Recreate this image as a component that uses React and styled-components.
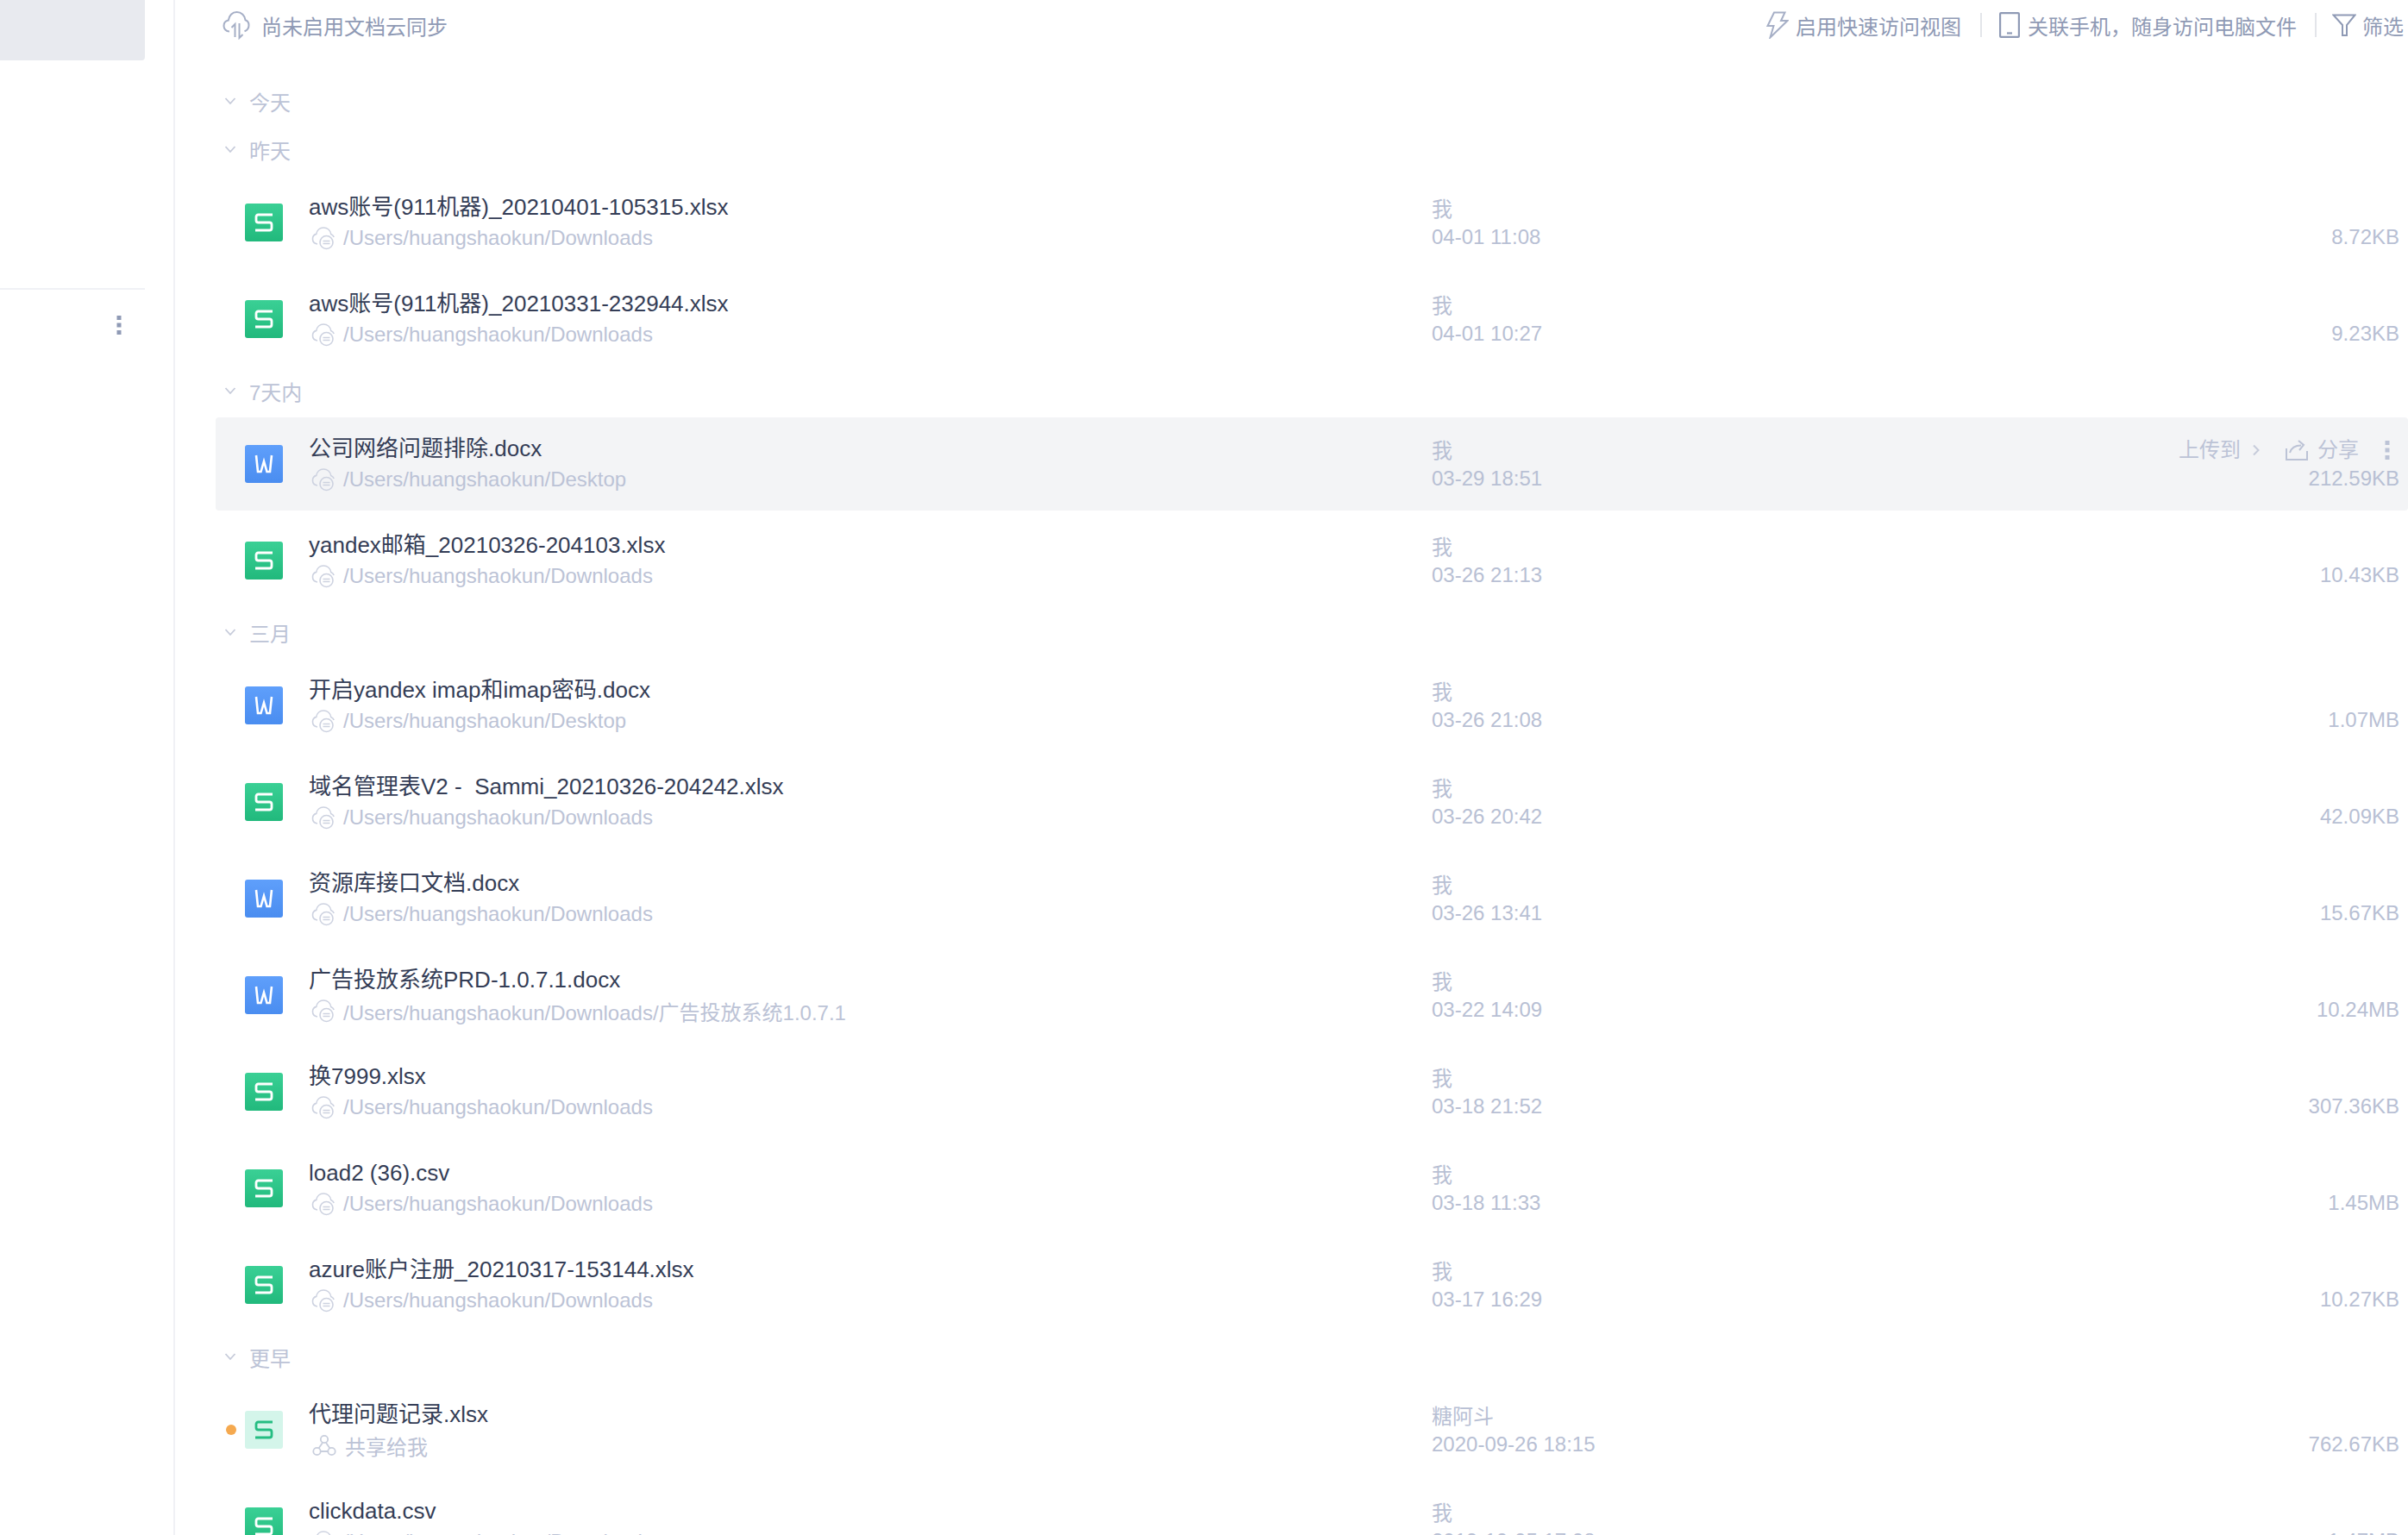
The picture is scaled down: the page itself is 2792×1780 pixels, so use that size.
import React from 'react';
import styled, { createGlobalStyle } from 'styled-components';

const FONT = '"Liberation Sans", "Noto Sans CJK SC", sans-serif';

const GlobalStyle = createGlobalStyle`
  html, body { margin: 0; padding: 0; background: #fff; }
  body { font-family: ${FONT}; overflow: hidden; }
`;

const Page = styled.div`
  display: flex;
  width: 2792px;
  height: 1780px;
  overflow: hidden;
`;

const Sidebar = styled.aside`
  width: 201px;
  flex: none;
  border-right: 2px solid #f0f1f5;
  display: flex;
  flex-direction: column;
`;

const SideActive = styled.div`
  width: 168px;
  height: 70px;
  background: #e8eaef;
  border-bottom-right-radius: 4px;
`;

const SideRule = styled.div`
  width: 168px;
  height: 2px;
  margin-top: 264px;
  background: #f0f1f5;
`;

const SideMore = styled.div`
  display: flex;
  justify-content: flex-end;
  width: 168px;
  margin-top: 30px;
  padding-right: 27px;
  box-sizing: border-box;
`;

const Main = styled.main`
  flex: 1;
  min-width: 0;
  padding-left: 47px;
`;

const Toolbar = styled.div`
  height: 90px;
  padding-bottom: 32px;
  box-sizing: border-box;
  display: flex;
  align-items: center;
  justify-content: space-between;
  padding-left: 8px;
  padding-right: 5px;
  color: #8f9ab5;
  font-size: 24px;
`;

const ToolGroup = styled.div`
  display: flex;
  align-items: center;
`;

const ToolItem = styled.span`
  display: flex;
  align-items: center;
  gap: ${(p) => p.$gap || 8}px;
`;

const ToolRule = styled.span`
  width: 2px;
  height: 28px;
  margin: 0 ${(p) => p.$right}px 0 ${(p) => p.$left}px;
  background: #e3e5ea;
`;

const SectionHead = styled.div`
  height: 56px;
  padding-bottom: 2px;
  box-sizing: border-box;
  display: flex;
  align-items: center;
  gap: 15px;
  padding-left: 10px;
  color: #bcc3d6;
  font-size: 24px;
`;

const RowSlot = styled.div`
  padding: 2px 0;
`;

const Row = styled.div`
  position: relative;
  height: 108px;
  padding-left: 34px;
  padding-right: 10px;
  display: grid;
  grid-template-columns: 44px 1332px 1fr auto;
  align-items: center;
  border-radius: 4px;
  background: ${(p) => (p.$active ? '#f3f4f6' : 'transparent')};
`;

const Unread = styled.span`
  position: absolute;
  left: 12px;
  top: 48px;
  width: 12px;
  height: 12px;
  border-radius: 50%;
  background: #f5a94f;
`;

const FileBadge = styled.div`
  width: 44px;
  height: 44px;
  border-radius: 3px;
  display: flex;
  align-items: center;
  justify-content: center;
  background: ${(p) =>
    p.$kind === 'w'
      ? 'linear-gradient(180deg, #5f9ffb, #4a8df0)'
      : p.$kind === 'shared'
      ? '#d4f5ea'
      : 'linear-gradient(180deg, #3ad095, #21b97c)'};
`;

const NameCol = styled.div`
  padding-left: 30px;
  display: flex;
  flex-direction: column;
  min-width: 0;
`;

const Title = styled.div`
  font-size: 26px;
  line-height: 36px;
  color: #343d56;
  white-space: pre;
`;

const PathLine = styled.div`
  display: flex;
  align-items: center;
  gap: 9px;
  height: 36px;
  padding-left: 3px;
  font-size: 24px;
  color: #bcc3d6;
  white-space: nowrap;
`;

const MetaCol = styled.div`
  display: flex;
  flex-direction: column;
  padding-top: 2px;
  font-size: 24px;
  line-height: 32px;
  color: #b8c0d4;
`;

const RightCol = styled.div`
  align-self: stretch;
  position: relative;
  display: flex;
  align-items: flex-end;
  justify-content: flex-end;
  padding-bottom: 21px;
  box-sizing: border-box;
  font-size: 24px;
  line-height: 32px;
  color: #b8c0d4;
`;

const RowActions = styled.div`
  position: absolute;
  right: 11px;
  top: 22px;
  display: flex;
  align-items: center;
  white-space: nowrap;
  color: #bcc3d6;
`;

const ActionText = styled.span`
  display: flex;
  align-items: center;
  gap: ${(p) => p.$gap || 0}px;
  margin-right: ${(p) => p.$mr || 0}px;
`;

const SheetGlyph = ({ color = '#fff' }) => (
  <svg width="22" height="22" viewBox="0 0 22 22" fill="none" stroke={color} strokeWidth="2.8">
    <path d="M21 2H4.500Q2 2 2 4.500V8.500Q2 11 4.500 11H17.500Q20 11 20 13.500V17.500Q20 20 17.500 20H1" />
  </svg>
);

const WordGlyph = () => (
  <svg width="22" height="22" viewBox="0 0 22 22" fill="none" stroke="#fff" strokeWidth="2.6">
    <path d="M2 1L4 20H7.500L11 8L14.500 20H18L20 1" />
  </svg>
);

const CloudSync = () => (
  <svg width="28" height="30" viewBox="0 0 28 30" fill="none" stroke="#cdd2e0" strokeWidth="1.6">
    <path d="M7 22C3.500 21.500 1.500 19 1.500 16c0-3 1.800-5 4.300-5.600C6.500 6 9.800 3 14 3c4.600 0 8 3 8.700 7.500 1.600.7 3 2 3.500 3.500" />
    <circle cx="17.500" cy="20" r="7.500" />
    <path d="M13.500 18.500h8M13.500 21.500h8" />
  </svg>
);

const SharedIcon = () => (
  <svg width="30" height="26" viewBox="0 0 30 26" fill="none" stroke="#c9cfdd" strokeWidth="1.800">
    <circle cx="15" cy="6" r="4.200" />
    <circle cx="6.500" cy="20" r="4.200" />
    <circle cx="23.500" cy="20" r="4.200" />
    <path d="M13 10l-4.500 6.500M17 10l4.500 6.500M11 20h8" />
  </svg>
);

const CloudOff = () => (
  <svg width="32" height="34" viewBox="0 0 32 34" fill="none" stroke="#a6afc6" strokeWidth="2">
    <path d="M8 24.500C4 24.500 1.500 21.500 1.500 18c0-3.300 2.200-5.800 5.300-6.400C7.500 6 11.300 2 16.500 2c5.500 0 9.500 4 10 9.200 2.500.8 4 3.300 4 6.100 0 3.600-2 6-5 7" />
    <path d="M14.500 31V16l-4 4M19.500 15v17l4-4" />
  </svg>
);

const Bolt = () => (
  <svg width="26" height="32" viewBox="0 0 26 32" fill="none" stroke="#a6afc6" strokeWidth="2">
    <path d="M9 1.500h12.500L17 11h7.500L4.500 30.500 8.500 17H1.500z" />
  </svg>
);

const Phone = () => (
  <svg width="24" height="30" viewBox="0 0 24 30" fill="none" stroke="#8f9ab5" strokeWidth="2.200">
    <rect x="1.100" y="1.100" width="21.800" height="27.800" rx="1" />
    <path d="M9 24.500h6" />
  </svg>
);

const Funnel = () => (
  <svg width="28" height="26" viewBox="0 0 28 26" fill="none" stroke="#8f9ab5" strokeWidth="2">
    <path d="M1.500 1.500h25L17 13v12h-5V13z" />
  </svg>
);

const Chevron = () => (
  <svg width="14" height="10" viewBox="0 0 14 10" fill="none" stroke="#c6cbda" strokeWidth="1.800">
    <path d="M1.500 2l5.500 6 5.500-6" />
  </svg>
);

const RightChevron = () => (
  <svg width="8" height="14" viewBox="0 0 8 14" fill="none" stroke="#c6cbda" strokeWidth="2">
    <path d="M1 1.500L6.500 7 1 12.500" />
  </svg>
);

const ShareIcon = () => (
  <svg width="26" height="24" viewBox="0 0 26 24" fill="none" stroke="#bcc3d6" strokeWidth="2">
    <path d="M1 10v13h24v-10" />
    <path d="M5 15c1.500-5 6-8.500 13-8.500M15 1l6 5-5 6" />
  </svg>
);

const VDots = ({ color = '#bcc3d6' }) => (
  <svg width="6" height="22" viewBox="0 0 6 22" fill={color}>
    <rect width="5" height="5" x="0.500" y="0" />
    <rect width="5" height="5" x="0.500" y="8.500" />
    <rect width="5" height="5" x="0.500" y="17" />
  </svg>
);

const D = '/Users/huangshaokun/Downloads';
const DK = '/Users/huangshaokun/Desktop';

const sections = [
  { name: '今天', rows: [] },
  {
    name: '昨天',
    rows: [
      { kind: 's', title: 'aws账号(911机器)_20210401-105315.xlsx', path: D, who: '我', date: '04-01 11:08', size: '8.72KB' },
      { kind: 's', title: 'aws账号(911机器)_20210331-232944.xlsx', path: D, who: '我', date: '04-01 10:27', size: '9.23KB' },
    ],
  },
  {
    name: '7天内',
    rows: [
      { kind: 'w', title: '公司网络问题排除.docx', path: DK, who: '我', date: '03-29 18:51', size: '212.59KB', active: true },
      { kind: 's', title: 'yandex邮箱_20210326-204103.xlsx', path: D, who: '我', date: '03-26 21:13', size: '10.43KB' },
    ],
  },
  {
    name: '三月',
    rows: [
      { kind: 'w', title: '开启yandex imap和imap密码.docx', path: DK, who: '我', date: '03-26 21:08', size: '1.07MB' },
      { kind: 's', title: '域名管理表V2 -  Sammi_20210326-204242.xlsx', path: D, who: '我', date: '03-26 20:42', size: '42.09KB' },
      { kind: 'w', title: '资源库接口文档.docx', path: D, who: '我', date: '03-26 13:41', size: '15.67KB' },
      { kind: 'w', title: '广告投放系统PRD-1.0.7.1.docx', path: D + '/广告投放系统1.0.7.1', who: '我', date: '03-22 14:09', size: '10.24MB' },
      { kind: 's', title: '换7999.xlsx', path: D, who: '我', date: '03-18 21:52', size: '307.36KB' },
      { kind: 's', title: 'load2 (36).csv', path: D, who: '我', date: '03-18 11:33', size: '1.45MB' },
      { kind: 's', title: 'azure账户注册_20210317-153144.xlsx', path: D, who: '我', date: '03-17 16:29', size: '10.27KB' },
    ],
  },
  {
    name: '更早',
    rows: [
      { kind: 'shared', title: '代理问题记录.xlsx', shared: true, who: '糖阿斗', date: '2020-09-26 18:15', size: '762.67KB' },
      { kind: 's', title: 'clickdata.csv', path: D, who: '我', date: '2019-10-05 17:08', size: '1.47MB' },
    ],
  },
];

const FileRow = ({ row }) => (
  <RowSlot>
    <Row $active={row.active}>
      {row.shared && <Unread />}
      <FileBadge $kind={row.kind}>
        {row.kind === 'w' ? <WordGlyph /> : <SheetGlyph color={row.kind === 'shared' ? '#25bd82' : '#fff'} />}
      </FileBadge>
      <NameCol>
        <Title>{row.title}</Title>
        <PathLine>
          {row.shared ? <SharedIcon /> : <CloudSync />}
          {row.shared ? '共享给我' : row.path}
        </PathLine>
      </NameCol>
      <MetaCol>
        <span>{row.who}</span>
        <span>{row.date}</span>
      </MetaCol>
      <RightCol>
        {row.active && (
          <RowActions>
            <ActionText $gap={14} $mr={30}>上传到<RightChevron /></ActionText>
            <ActionText $gap={11} $mr={30}><ShareIcon />分享</ActionText>
            <VDots />
          </RowActions>
        )}
        {row.size}
      </RightCol>
    </Row>
  </RowSlot>
);

export default function App() {
  return (
    <Page>
      <GlobalStyle />
      <Sidebar>
        <SideActive />
        <SideRule />
        <SideMore><VDots color="#8f9ab5" /></SideMore>
      </Sidebar>
      <Main>
        <Toolbar>
          <ToolItem $gap={13}><CloudOff />尚未启用文档云同步</ToolItem>
          <ToolGroup>
            <ToolItem><Bolt />启用快速访问视图</ToolItem>
            <ToolRule $left={22} $right={20} />
            <ToolItem $gap={9}><Phone />关联手机，随身访问电脑文件</ToolItem>
            <ToolRule $left={21} $right={18} />
            <ToolItem $gap={7}><Funnel />筛选</ToolItem>
          </ToolGroup>
        </Toolbar>
        {sections.map((s) => (
          <React.Fragment key={s.name}>
            <SectionHead><Chevron />{s.name}</SectionHead>
            {s.rows.map((r) => <FileRow key={r.title} row={r} />)}
          </React.Fragment>
        ))}
      </Main>
    </Page>
  );
}
